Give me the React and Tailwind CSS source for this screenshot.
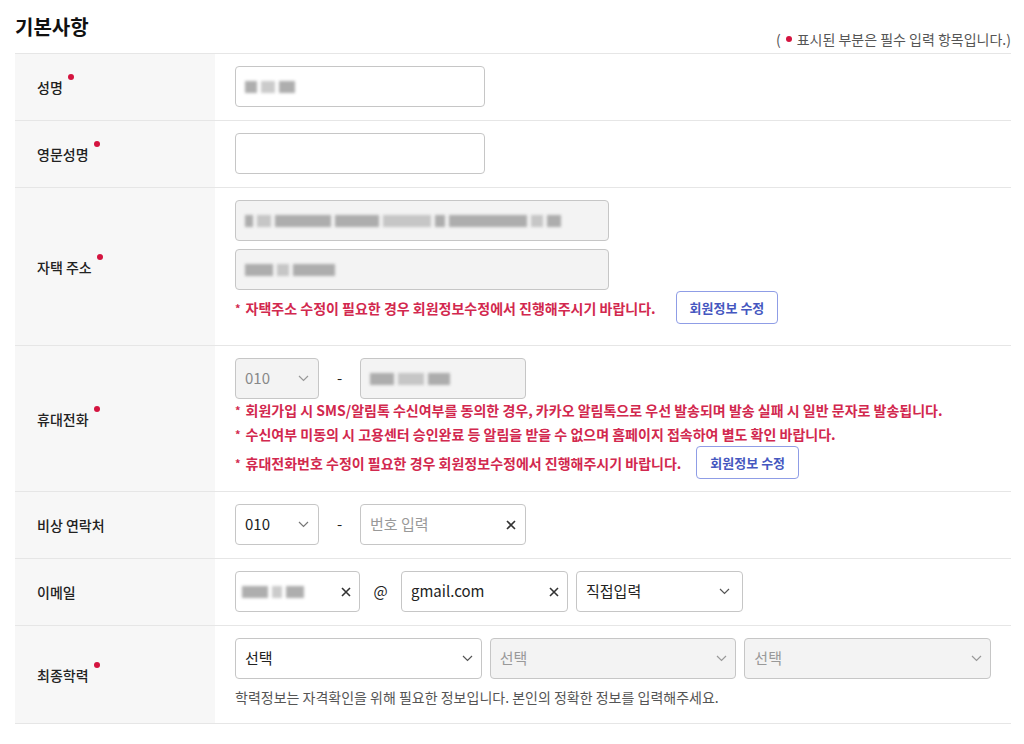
import React from "react";

const F = "font-['Noto_Sans_CJK_KR','Noto_Sans',sans-serif]";

function Dot() {
  return <span className="ml-[5px] mt-[-3px] inline-block h-[6px] w-[6px] shrink-0 rounded-full bg-[#d4143f]" />;
}

function Label({ children, req }) {
  return (
    <div className="flex items-center bg-[#f7f7f7] pl-[22px]">
      <span className="flex items-start text-[14px] font-medium leading-[20px] text-[#222]">
        {children}
        {req && <Dot />}
      </span>
    </div>
  );
}

function Row({ label, req, children, className = "" }) {
  return (
    <div className="grid grid-cols-[200px_1fr] border-b border-[#e6e6e6]">
      <Label req={req}>{label}</Label>
      <div className={"pl-[20px] " + className}>{children}</div>
    </div>
  );
}

function Chevron({ color = "#777" }) {
  return (
    <svg width="11" height="7" viewBox="0 0 11 7" className="shrink-0">
      <polyline points="1,1 5.5,5.5 10,1" fill="none" stroke={color} strokeWidth="1.2" />
    </svg>
  );
}

function XIcon() {
  return (
    <svg width="10" height="10" viewBox="0 0 10 10" className="shrink-0">
      <path d="M1 1 L9 9 M9 1 L1 9" stroke="#333" strokeWidth="1.6" />
    </svg>
  );
}

function Blur({ segs }) {
  return (
    <div className="flex items-center gap-[4px] blur-[1.6px]">
      {segs.map((w, i) => (
        <div key={i} className="h-[12px] bg-[#a0a0a0]" style={{ width: w, opacity: i % 3 === 1 ? 0.55 : 0.85 }} />
      ))}
    </div>
  );
}

function Note({ children }) {
  return (
    <p className="h-[24px] text-[14px] font-bold leading-[24px] text-[#d2284e]">
      <span className="mr-[5px] align-top text-[11px] leading-[24px]">*</span>
      {children}
    </p>
  );
}

function EditBtn({ ml = "ml-[20px]" }) {
  return (
    <button className={ml + " h-[33px] rounded-[4px] border border-[#8f9de6] bg-white px-[13px] text-[13px] font-bold text-[#4557c0]"}>
      회원정보 수정
    </button>
  );
}

export default function App() {
  const box = "flex h-[41px] items-center rounded-[4px] border border-[#c6c6c6] px-[9px] text-[15px]";
  return (
    <div className={F + " min-h-[744px] bg-white text-[#222]"}>
      <div className="ml-[15px] w-[996px]">
        <div className="flex h-[53px] justify-between">
          <h2 className="pt-[13px] text-[20px] font-bold leading-[28px] text-[#111]">기본사항</h2>
          <p className="flex items-center self-end pb-[5px] text-[14px] leading-[18px] text-[#555]">
            ( <span className="mx-[5px] inline-block h-[6px] w-[6px] rounded-full bg-[#d4143f]" />표시된 부분은 필수 입력 항목입니다.)
          </p>
        </div>
        <div className="border-t border-[#e6e6e6]">
          <Row label="성명" req className="pt-[12px] pb-[13px]">
            <div className={box + " w-[250px]"}>
              <Blur segs={[12, 14, 16]} />
            </div>
          </Row>
          <Row label="영문성명" req className="pt-[12px] pb-[13px]">
            <div className={box + " w-[250px]"} />
          </Row>
          <Row label="자택 주소" req className="pt-[12px] pb-[21px]">
            <div className={box + " w-[374px] bg-[#f3f3f3]"}>
              <Blur segs={[8, 14, 56, 44, 48, 10, 78, 12, 14]} />
            </div>
            <div className={box + " mt-[8px] w-[374px] bg-[#f3f3f3]"}>
              <Blur segs={[28, 12, 42]} />
            </div>
            <div className="mt-[1px] flex items-center">
              <Note>자택주소 수정이 필요한 경우 회원정보수정에서 진행해주시기 바랍니다.</Note>
              <EditBtn />
            </div>
          </Row>
          <Row label="휴대전화" req className="pt-[12px] pb-[12px]">
            <div className="flex items-center">
              <div className={box + " w-[84px] justify-between bg-[#f3f3f3] text-[#888]"}>
                <span>010</span>
                <Chevron color="#999" />
              </div>
              <span className="w-[41px] text-center text-[15px]">-</span>
              <div className={box + " w-[166px] bg-[#f3f3f3]"}>
                <Blur segs={[24, 26, 22]} />
              </div>
            </div>
            <div className="mt-[-1px]">
              <Note>회원가입 시 SMS/알림톡 수신여부를 동의한 경우, 카카오 알림톡으로 우선 발송되며 발송 실패 시 일반 문자로 발송됩니다.</Note>
              <Note>수신여부 미동의 시 고용센터 승인완료 등 알림을 받을 수 없으며 홈페이지 접속하여 별도 확인 바랍니다.</Note>
              <div className="flex h-[33px] items-center">
                <Note>휴대전화번호 수정이 필요한 경우 회원정보수정에서 진행해주시기 바랍니다.</Note>
                <EditBtn ml="ml-[15px]" />
              </div>
            </div>
          </Row>
          <Row label="비상 연락처" className="pt-[12px] pb-[13px]">
            <div className="flex items-center">
              <div className={box + " w-[84px] justify-between"}>
                <span>010</span>
                <Chevron />
              </div>
              <span className="w-[41px] text-center text-[15px]">-</span>
              <div className={box + " w-[166px] justify-between"}>
                <span className="text-[#999]">번호 입력</span>
                <XIcon />
              </div>
            </div>
          </Row>
          <Row label="이메일" className="pt-[12px] pb-[13px]">
            <div className="flex items-center">
              <div className={box + " w-[125px] justify-between pl-[6px] pr-[8px]"}>
                <Blur segs={[26, 10, 18]} />
                <XIcon />
              </div>
              <span className="w-[41px] text-center text-[15px]">@</span>
              <div className={box + " w-[167px] justify-between pr-[8px]"}>
                <span>gmail.com</span>
                <XIcon />
              </div>
              <div className={box + " ml-[8px] w-[167px] justify-between pr-[12px]"}>
                <span>직접입력</span>
                <Chevron color="#555" />
              </div>
            </div>
          </Row>
          <Row label="최종학력" req className="pt-[12px] pb-[16px]">
            <div className="grid w-[756px] grid-cols-3 gap-[8px]">
              <div className={box + " justify-between pr-[8px]"}>
                <span>선택</span>
                <Chevron color="#555" />
              </div>
              <div className={box + " justify-between bg-[#f3f3f3] pr-[8px] text-[#999]"}>
                <span>선택</span>
                <Chevron color="#999" />
              </div>
              <div className={box + " justify-between bg-[#f3f3f3] pr-[8px] text-[#999]"}>
                <span>선택</span>
                <Chevron color="#999" />
              </div>
            </div>
            <p className="mt-[8px] h-[20px] text-[14px] leading-[20px] text-[#555]">
              학력정보는 자격확인을 위해 필요한 정보입니다. 본인의 정확한 정보를 입력해주세요.
            </p>
          </Row>
        </div>
      </div>
    </div>
  );
}
